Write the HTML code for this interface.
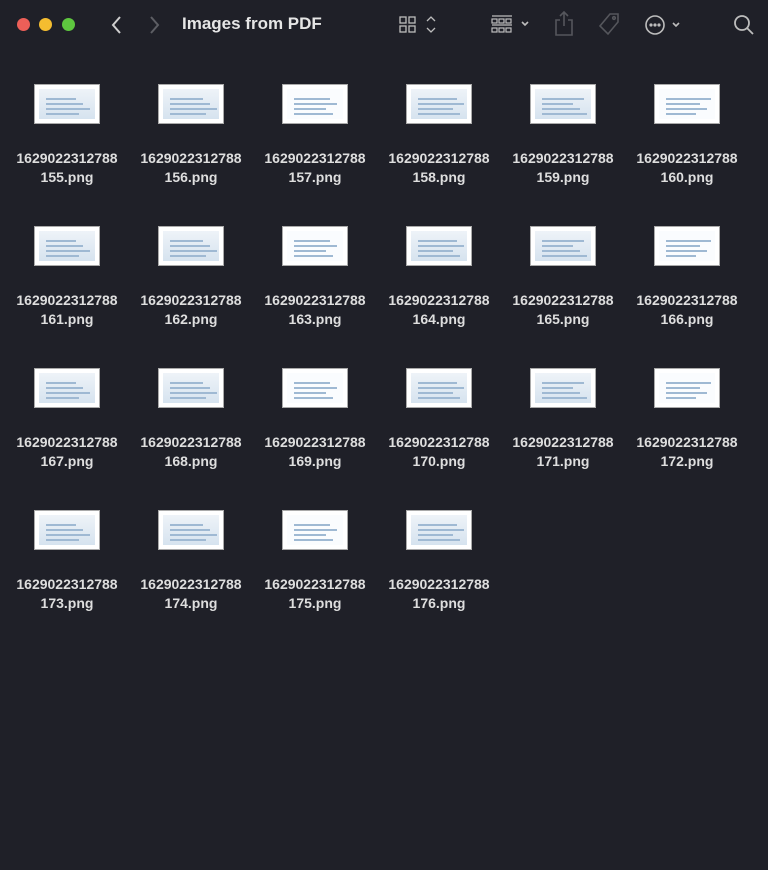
<!DOCTYPE html>
<html><head><meta charset="utf-8"><style>
body{margin:0;width:768px;height:870px;background:#1f2028;font-family:"Liberation Sans",sans-serif;overflow:hidden;position:relative}
.dot{position:absolute;top:18px;width:13px;height:13px;border-radius:50%}
.title{position:absolute;left:182px;top:14px;color:#e6e6e6;font-weight:bold;font-size:17px}
.item{position:absolute;width:124px;text-align:center}
.th{width:64px;height:38px;margin:0 auto;background:#fff;border:1px solid #aaa;position:relative;overflow:hidden}
.in{position:absolute;left:4px;top:4px;right:4px;bottom:4px;background:linear-gradient(180deg,#eef3f8,#d6e3ef)}
.in.b{background:#fafcfe}
.ln{position:absolute;left:7px;height:2px;background:#9fb9d3}
.lab{color:#dedede;font-size:14px;font-weight:bold;line-height:19px;margin-top:25px}
svg{position:absolute}
</style></head><body>
<div class="dot" style="left:17px;background:#ec5f58"></div>
<div class="dot" style="left:39px;background:#f4bd30"></div>
<div class="dot" style="left:62px;background:#5ec73f"></div>
<svg style="left:106px;top:14px" width="20" height="22"><path d="M14 3 L7 11 L14 19" stroke="#cfcfcf" stroke-width="2" fill="none"/></svg>
<svg style="left:146px;top:14px" width="20" height="22"><path d="M5 3 L12 11 L5 19" stroke="#5d5e64" stroke-width="2" fill="none"/></svg>
<div class="title">Images from PDF</div>
<svg style="left:398px;top:14px" width="46" height="24" fill="none" stroke="#bdbdbd" stroke-width="1.3"><rect x="2" y="3" width="6" height="6"/><rect x="11" y="3" width="6" height="6"/><rect x="2" y="12" width="6" height="6"/><rect x="11" y="12" width="6" height="6"/><path d="M29 7 L33 3 L37 7 M29 14 L33 18 L37 14"/></svg>
<svg style="left:490px;top:14px" width="46" height="24" fill="none" stroke="#bdbdbd" stroke-width="1.2"><path d="M2 2 H22 M2 11 H22"/><rect x="2" y="5" width="5" height="4"/><rect x="9" y="5" width="5" height="4"/><rect x="16" y="5" width="5" height="4"/><rect x="2" y="14" width="5" height="4"/><rect x="9" y="14" width="5" height="4"/><rect x="16" y="14" width="5" height="4"/><path d="M32 8 L35 11 L38 8" stroke-width="1.6"/></svg>
<svg style="left:553px;top:10px" width="22" height="28" fill="none" stroke="#55565c" stroke-width="1.6"><path d="M7 10 H3 V25 H19 V10 H15 M11 2 V16 M7 6 L11 2 L15 6"/></svg>
<svg style="left:596px;top:12px" width="26" height="26" fill="none" stroke="#55565c" stroke-width="1.6"><path d="M14 2 H22 V10 L12 22 L4 14 Z"/><circle cx="18" cy="6" r="1.3"/></svg>
<svg style="left:643px;top:12px" width="44" height="26" fill="none" stroke="#bdbdbd" stroke-width="1.6"><circle cx="12" cy="13" r="9"/><circle cx="8" cy="13" r="0.8" fill="#bdbdbd"/><circle cx="12" cy="13" r="0.8" fill="#bdbdbd"/><circle cx="16" cy="13" r="0.8" fill="#bdbdbd"/><path d="M30 11 L33 14 L36 11"/></svg>
<svg style="left:732px;top:13px" width="24" height="24" fill="none" stroke="#bdbdbd" stroke-width="1.8"><circle cx="10" cy="10" r="7"/><path d="M15 15 L21 21"/></svg>
<div id="g"></div>
<script>
var h='';for(var i=0;i<22;i++){var c=i%6,r=Math.floor(i/6);var n=155+i;var b=(i%3==2)?' b':'';
var lines='';for(var k=0;k<4;k++)lines+='<div class="ln" style="top:'+(9+k*5)+'px;width:'+(30+(k*7+i*3)%18)+'px"></div>';
h+='<div class="item" style="left:'+(5+c*124)+'px;top:'+(84+r*142)+'px"><div class="th"><div class="in'+b+'">'+lines+'</div></div><div class="lab">1629022312788<br>'+n+'.png</div></div>';}
document.getElementById('g').innerHTML=h;
</script>
</body></html>
